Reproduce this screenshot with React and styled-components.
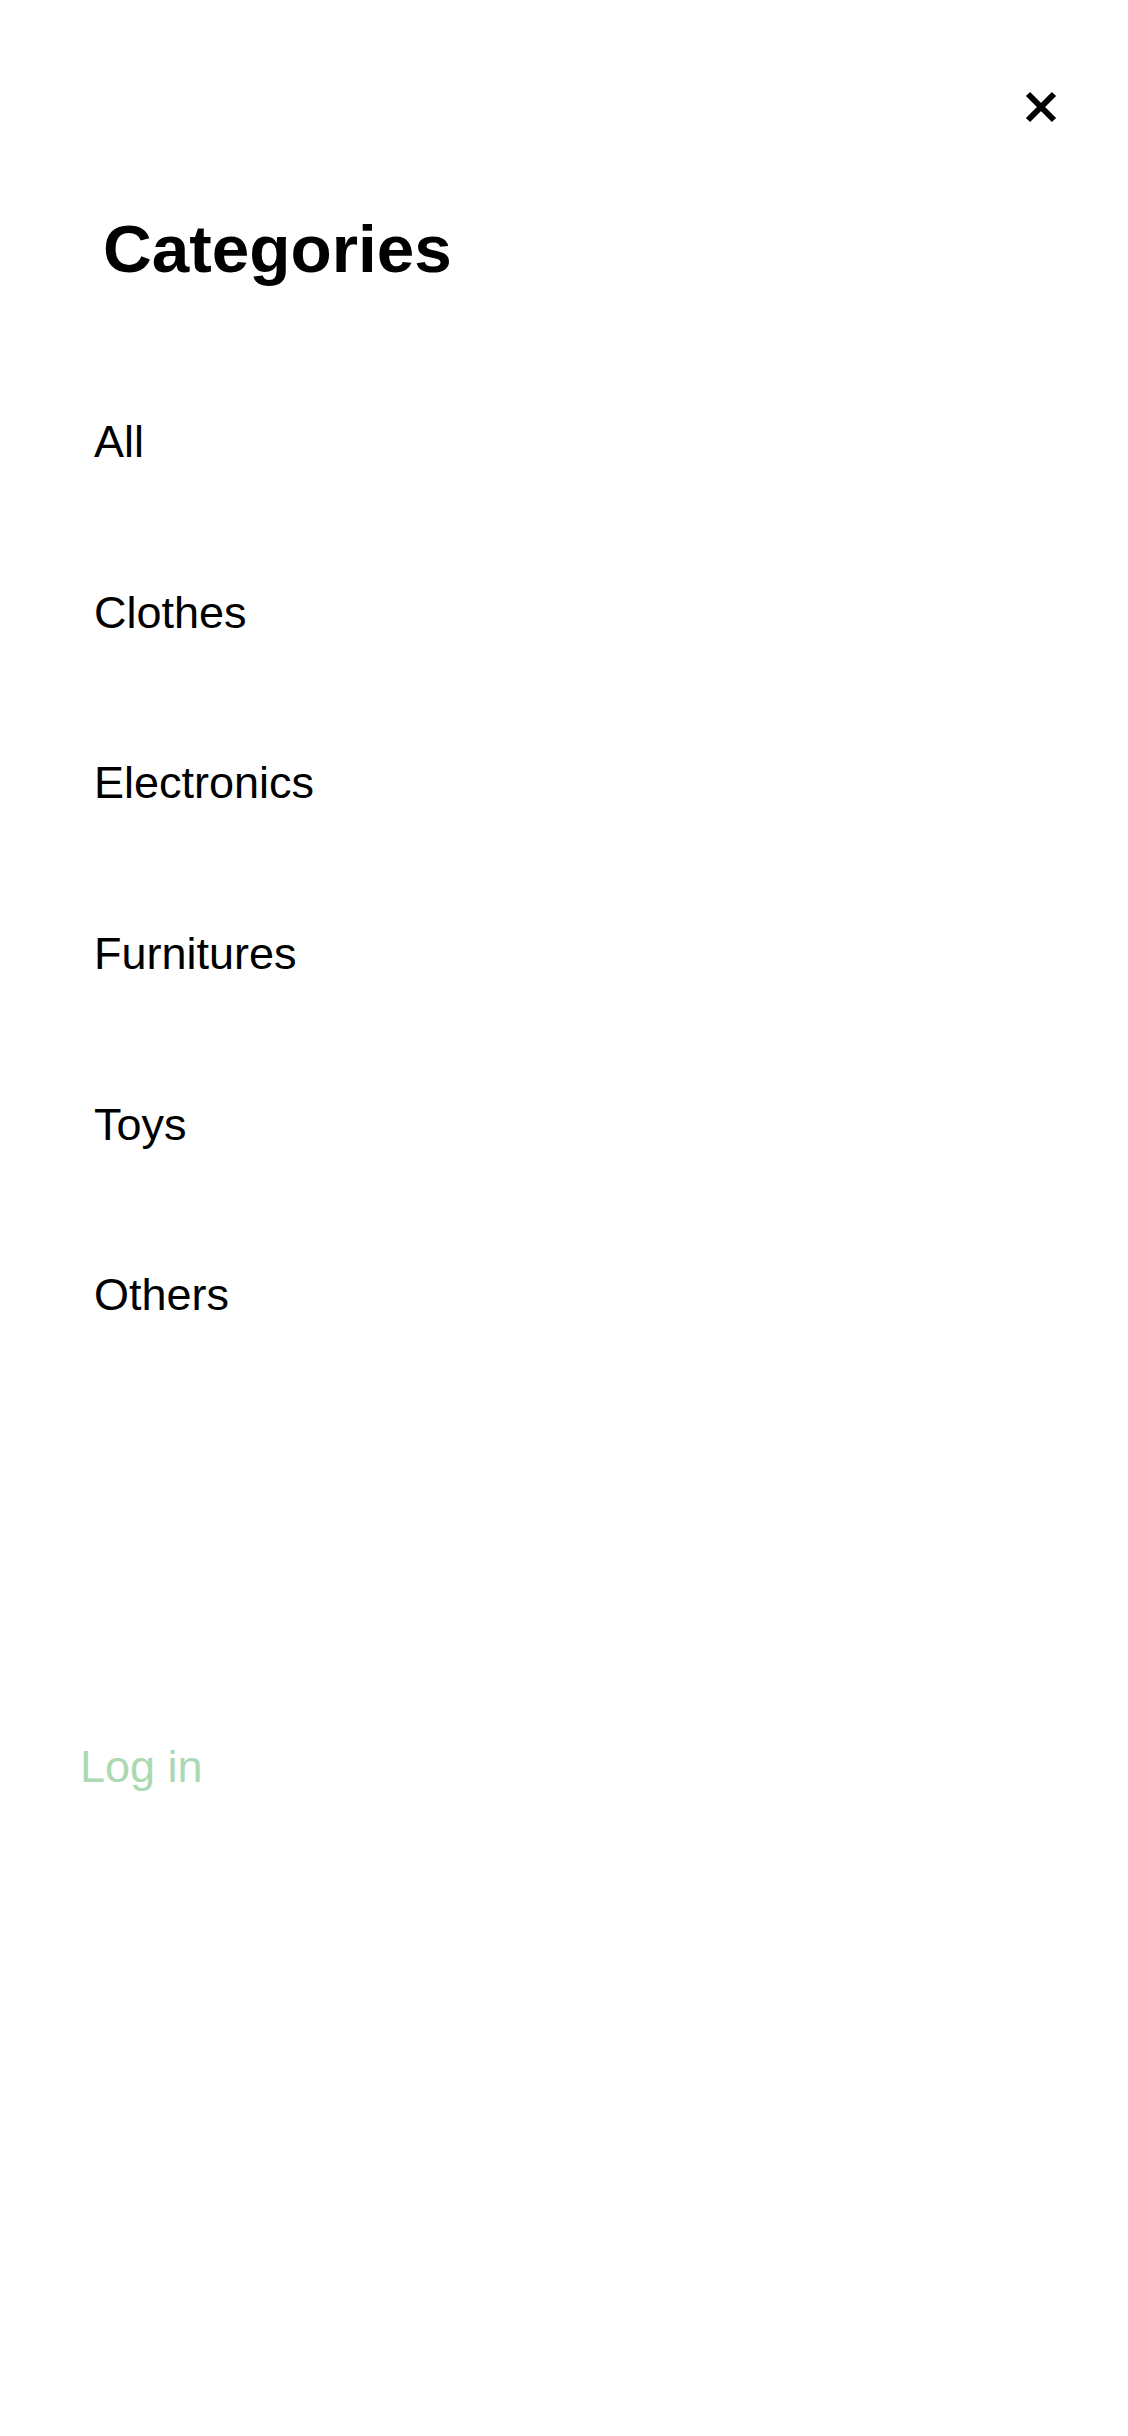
import styled, { createGlobalStyle } from "styled-components";

const GlobalStyle = createGlobalStyle`
  html, body {
    margin: 0;
    padding: 0;
    background: #ffffff;
  }
  body {
    font-family: "Liberation Sans", Arial, sans-serif;
    color: #000000;
  }
`;

const Drawer = styled.aside`
  display: flex;
  flex-direction: column;
  width: 100%;
  min-height: 2436px;
  background: #ffffff;
`;

const TopBar = styled.div`
  display: flex;
  justify-content: flex-end;
  padding: 91px 71px 0 0;
`;

const CloseButton = styled.button`
  display: flex;
  align-items: center;
  justify-content: center;
  width: 32px;
  height: 32px;
  padding: 0;
  border: none;
  background: transparent;
  cursor: pointer;
`;

const Title = styled.h2`
  margin: 88px 0 0;
  padding-left: 103px;
  font-size: 67.5px;
  line-height: 75px;
  font-weight: 700;
`;

const CategoryList = styled.ul`
  list-style: none;
  margin: 71px 0 0;
  padding: 0 0 0 94px;
`;

const CategoryItem = styled.li`
  padding: 60.3px 0;
  font-size: 45px;
  line-height: 50px;
  cursor: pointer;
`;

const LoginLink = styled.a`
  display: block;
  margin-top: 361px;
  padding-left: 80px;
  font-size: 45px;
  line-height: 50px;
  color: #acd9b3;
  text-decoration: none;
  cursor: pointer;
`;

const categories = ["All", "Clothes", "Electronics", "Furnitures", "Toys", "Others"];

export default function App() {
  return (
    <>
      <GlobalStyle />
      <Drawer>
        <TopBar>
          <CloseButton aria-label="Close">
            <svg width="32" height="32" viewBox="0 0 32 32">
              <path
                d="M3 3 L29 29 M29 3 L3 29"
                stroke="#000"
                strokeWidth="6"
                strokeLinecap="butt"
              />
            </svg>
          </CloseButton>
        </TopBar>
        <Title>Categories</Title>
        <CategoryList>
          {categories.map((c) => (
            <CategoryItem key={c}>{c}</CategoryItem>
          ))}
        </CategoryList>
        <LoginLink>Log in</LoginLink>
      </Drawer>
    </>
  );
}
